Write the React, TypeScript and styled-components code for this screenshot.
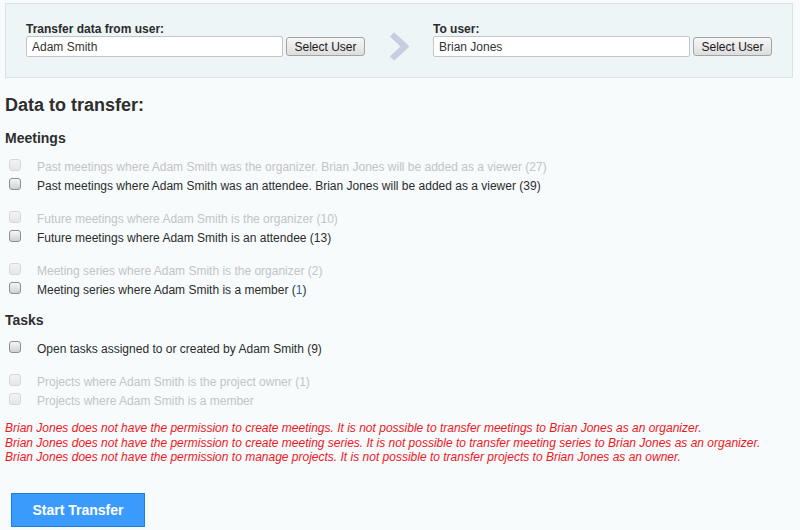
import React from 'react'
import styled, { createGlobalStyle } from 'styled-components'

const GlobalStyle = createGlobalStyle`
  html, body {
    margin: 0;
    background: #f7fbfc;
  }
  body {
    font-family: 'Liberation Sans', Arial, sans-serif;
    font-size: 12px;
    color: #333;
  }
`

type Item = { text: string; count?: string; disabled?: boolean; link?: boolean }

const meetingGroups: Item[][] = [
  [
    {
      text: 'Past meetings where Adam Smith was the organizer. Brian Jones will be added as a viewer',
      count: '27',
      disabled: true,
    },
    {
      text: 'Past meetings where Adam Smith was an attendee. Brian Jones will be added as a viewer',
      count: '39',
    },
  ],
  [
    { text: 'Future meetings where Adam Smith is the organizer', count: '10', disabled: true },
    { text: 'Future meetings where Adam Smith is an attendee', count: '13' },
  ],
  [
    { text: 'Meeting series where Adam Smith is the organizer', count: '2', disabled: true },
    { text: 'Meeting series where Adam Smith is a member', count: '1', link: true },
  ],
]

const taskGroups: Item[][] = [
  [{ text: 'Open tasks assigned to or created by Adam Smith', count: '9' }],
  [
    { text: 'Projects where Adam Smith is the project owner', count: '1', disabled: true },
    { text: 'Projects where Adam Smith is a member', disabled: true },
  ],
]

const errors = [
  'Brian Jones does not have the permission to create meetings. It is not possible to transfer meetings to Brian Jones as an organizer.',
  'Brian Jones does not have the permission to create meeting series. It is not possible to transfer meeting series to Brian Jones as an organizer.',
  'Brian Jones does not have the permission to manage projects. It is not possible to transfer projects to Brian Jones as an owner.',
]

const Chevron = () => (
  <svg width='20' height='29' viewBox='0 0 20 29'>
    <polyline
      points='3,2.5 16,14.5 3,26.5'
      fill='none'
      stroke='#c6cee0'
      strokeWidth='6'
      strokeLinejoin='miter'
    />
  </svg>
)

const UserPicker = ({ label, value, col }: { label: string; value: string; col: number }) => (
  <>
    <PickerLabel $col={col}>{label}</PickerLabel>
    <PickerRow $col={col}>
      <NameInput defaultValue={value} />
      <SelectButton>Select User</SelectButton>
    </PickerRow>
  </>
)

const Group = ({ items }: { items: Item[] }) => (
  <GroupBox>
    {items.map((it) => (
      <Row key={it.text} $disabled={it.disabled}>
        <Check type='checkbox' disabled={it.disabled} />
        <span>
          {it.text}
          {it.count && (
            <>
              {' '}(<Count $link={it.link}>{it.count}</Count>)
            </>
          )}
        </span>
      </Row>
    ))}
  </GroupBox>
)

const App = () => {
  return (
    <Page>
      <GlobalStyle />
      <Panel>
        <UserPicker label='Transfer data from user:' value='Adam Smith' col={1} />
        <ArrowCell>
          <Chevron />
        </ArrowCell>
        <UserPicker label='To user:' value='Brian Jones' col={3} />
      </Panel>

      <Title>Data to transfer:</Title>

      <SectionTitle>Meetings</SectionTitle>
      <Groups>
        {meetingGroups.map((g, i) => (
          <Group key={i} items={g} />
        ))}
      </Groups>

      <SectionTitle>Tasks</SectionTitle>
      <Groups>
        {taskGroups.map((g, i) => (
          <Group key={i} items={g} />
        ))}
      </Groups>

      <Errors>
        {errors.map((e) => (
          <div key={e}>{e}</div>
        ))}
      </Errors>

      <StartButton>Start Transfer</StartButton>
    </Page>
  )
}

const Page = styled.div`
  padding: 3px 7px 0 5px;
`

const Panel = styled.div`
  display: grid;
  grid-template-columns: 1fr 68px 1fr;
  grid-template-rows: 14px 21px;
  padding: 18px 20px 20px;
  background: #edf5f6;
  border: 1px solid #dbe3e6;
`

const PickerLabel = styled.label<{ $col: number }>`
  grid-column: ${(p) => p.$col};
  grid-row: 1;
  font-weight: bold;
  line-height: 14px;
  color: #2b2b2b;
`

const PickerRow = styled.div<{ $col: number }>`
  grid-column: ${(p) => p.$col};
  grid-row: 2;
  display: flex;
  align-items: center;
  gap: 3px;
`

const NameInput = styled.input`
  flex: 1;
  min-width: 0;
  height: 21px;
  box-sizing: border-box;
  padding: 0 5px;
  border: 1px solid #c3c6c9;
  border-radius: 2px;
  background: #fff;
  font-family: 'Liberation Sans', Arial, sans-serif;
  font-size: 12px;
  color: #333;
  outline: none;
`

const SelectButton = styled.button`
  width: 79px;
  height: 19px;
  box-sizing: border-box;
  padding: 0;
  border: 1px solid #a3a3a3;
  border-radius: 3px;
  background: linear-gradient(#f7f7f7, #dddddd);
  font-family: 'Liberation Sans', Arial, sans-serif;
  font-size: 12px;
  color: #1a1a1a;
`

const ArrowCell = styled.div`
  grid-column: 2;
  grid-row: 2;
  display: flex;
  justify-content: center;
  align-items: center;
`

const Title = styled.h2`
  margin: 17px 0 14px;
  font-size: 18px;
  line-height: 21px;
  font-weight: bold;
  color: #2e2e2e;
`

const SectionTitle = styled.h3`
  margin: 12px 0 0;
  font-size: 14px;
  line-height: 16px;
  font-weight: bold;
  color: #2e2e2e;
`

const Groups = styled.div`
  display: flex;
  flex-direction: column;
  gap: 14px;
  margin-top: 12px;
`

const GroupBox = styled.div`
  display: flex;
  flex-direction: column;
`

const Row = styled.label<{ $disabled?: boolean }>`
  display: flex;
  align-items: flex-start;
  height: 19px;
  line-height: 19px;
  color: ${(p) => (p.$disabled ? '#c4c4c4' : '#2b2b2b')};
`

const Check = styled.input`
  appearance: none;
  flex: none;
  width: 12px;
  height: 12px;
  margin: 1px 16px 0 4px;
  box-sizing: border-box;
  border: 1px solid #8d8f92;
  border-radius: 3px;
  background: linear-gradient(#f6f6f6, #cfd0d2);
  &:disabled {
    border-color: #d6d7d8;
    background: linear-gradient(#f3f3f3, #e6e6e6);
  }
`

const Count = styled.span<{ $link?: boolean }>`
  color: ${(p) => (p.$link ? '#2a62a8' : 'inherit')};
`

const Errors = styled.div`
  margin-top: 10px;
  font-style: italic;
  line-height: 14.5px;
  color: #f0161c;
`

const StartButton = styled.button`
  display: block;
  margin: 28px 0 0 6px;
  width: 134px;
  height: 34px;
  border: 1px solid #1c7fe0;
  background: #3a9bfc;
  color: #fff;
  font-family: 'Liberation Sans', Arial, sans-serif;
  font-size: 14px;
  font-weight: bold;
`

export default App
